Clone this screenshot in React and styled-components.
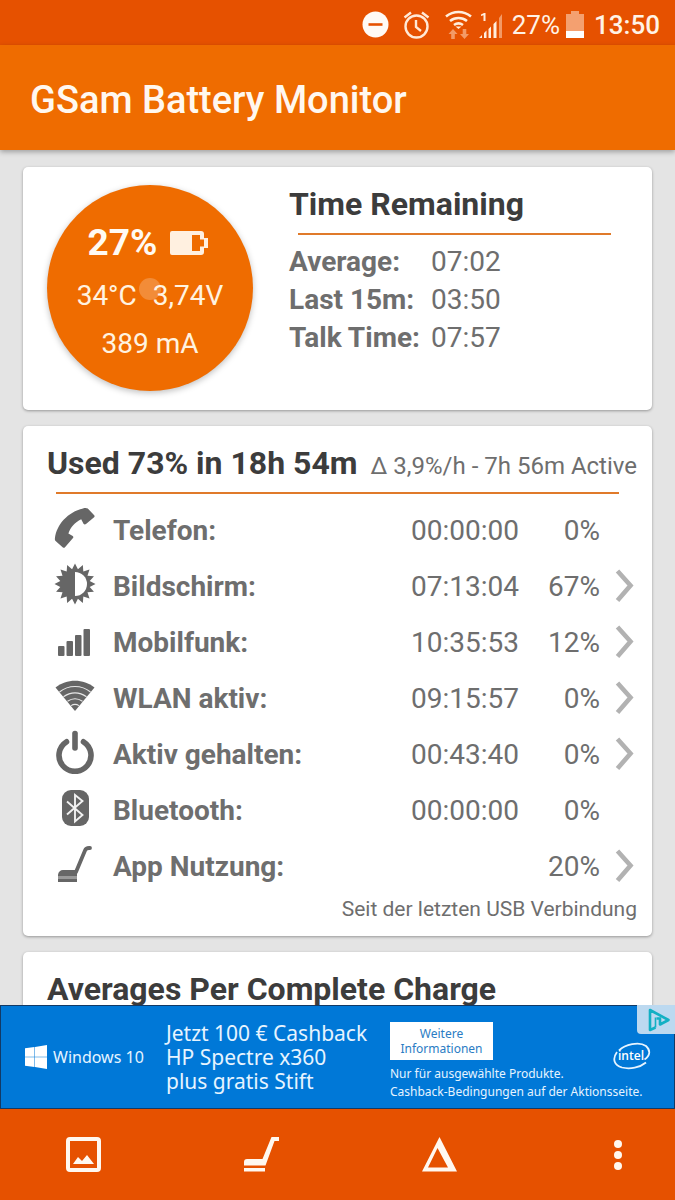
import React from 'react';
import styled, { createGlobalStyle } from 'styled-components';

const GlobalStyle = createGlobalStyle`
  *, *::before, *::after { box-sizing: border-box; }
  body {
    margin: 0;
    background: #e4e4e4;
    color: #6e6e6e;
    font-family: Roboto, "Liberation Sans", sans-serif;
  }
`;

const Screen = styled.div`
  display: flex;
  flex-direction: column;
  height: 100vh;
`;

const StatusBar = styled.div`
  display: flex;
  flex: none;
  align-items: center;
  justify-content: flex-end;
  height: 45px;
  padding: 4px 15px 0;
  background: #e65100;
  color: #fff3e6;
  font-size: 26px;
  svg { display: block; }
`;

const StatusGlyph = styled.svg`
  margin-right: ${(p) => p.$gap}px;
`;

const StatusText = styled.span`
  margin-right: ${(p) => p.$gap || 0}px;
  font-weight: ${(p) => (p.$strong ? 500 : 400)};
`;

const AppBar = styled.header`
  position: relative;
  display: flex;
  flex: none;
  align-items: center;
  height: 105px;
  padding: 4px 30px 0;
  background: #ef6c00;
  box-shadow: 0 2px 5px rgba(0, 0, 0, 0.3);
`;

const AppTitle = styled.h1`
  margin: 0;
  color: #fff8f0;
  font-size: 38px;
  font-weight: 500;
`;

const Content = styled.main`
  display: flex;
  flex: 1;
  flex-direction: column;
  gap: 16px;
  min-height: 0;
  padding: 17px 23px 0;
  overflow-y: auto;
  scrollbar-width: none;
`;

const Card = styled.section`
  flex: none;
  padding: 18px 15px ${(p) => p.$bottom}px 24px;
  border-radius: 5px;
  background: #fff;
  box-shadow: 0 1px 3px rgba(0, 0, 0, 0.35);
`;

const SummaryCard = styled(Card)`
  display: flex;
  gap: 36px;
`;

const CardTitle = styled.h2`
  margin: 0;
  color: #3c3c3c;
  font-size: 32px;
  font-weight: 700;
  line-height: 38px;
  white-space: nowrap;
`;

const TitleRow = styled.div`
  display: flex;
  align-items: baseline;
  justify-content: space-between;
`;

const TitleNote = styled.span`
  font-size: 24px;
  line-height: 28px;
  white-space: nowrap;
`;

const Divider = styled.div`
  height: 2px;
  margin: 10px 18px 8px 9px;
  background: #e07a2a;
`;

const Gauge = styled.div`
  position: relative;
  display: flex;
  flex: none;
  flex-direction: column;
  align-items: center;
  width: 206px;
  height: 206px;
  padding-top: 34px;
  border-radius: 50%;
  background: #ef6c00;
  box-shadow: 0 2px 6px rgba(0, 0, 0, 0.25);
  color: #fff3e0;
  font-size: 28px;
  line-height: 48px;
`;

const GaugeLine = styled.div`
  display: flex;
  align-items: center;
  gap: ${(p) => p.$gap || 0}px;
`;

const GaugeHead = styled(GaugeLine)`
  padding: 0 4px 5px 0;
`;

const GaugePercent = styled.strong`
  color: #fffaf2;
  font-size: 37px;
`;

const TouchDot = styled.span`
  position: absolute;
  top: 93px;
  left: 92px;
  width: 22px;
  height: 22px;
  border-radius: 50%;
  background: rgba(255, 255, 255, 0.22);
`;

const Remaining = styled.div`
  flex: 1;
  padding-right: 8px;
`;

const RemainingList = styled.dl`
  display: grid;
  grid-template-columns: 142px 1fr;
  margin: 0;
  font-size: 28px;
  line-height: 38px;
  white-space: nowrap;
  dt { font-weight: 700; }
  dd { margin: 0; }
`;

const UsageTable = styled.table`
  width: 100%;
  border-collapse: collapse;
  table-layout: fixed;
  font-size: 28px;
`;

const UsageRow = styled.tr`
  height: 56px;
`;

const IconCell = styled.td`
  width: 66px;
  padding: 0 0 4px 7px;
  svg { display: block; }
`;

const LabelCell = styled.th`
  padding: 0;
  font-weight: 700;
  text-align: left;
  white-space: nowrap;
`;

const ValueCell = styled.td`
  width: ${(p) => p.$width}px;
  padding: 0;
  text-align: right;
`;

const ActionCell = styled.td`
  width: 37px;
  padding: 0;
`;

const IconButton = styled.button`
  display: flex;
  align-items: center;
  justify-content: center;
  width: ${(p) => p.$width}px;
  height: 40px;
  padding: 0;
  border: 0;
  background: none;
  cursor: pointer;
`;

const RowButton = styled(IconButton)`
  margin-left: 11px;
`;

const CardNote = styled.p`
  margin: 0;
  font-size: 21px;
  line-height: 30px;
  text-align: right;
`;

const AdBanner = styled.aside`
  position: relative;
  display: flex;
  flex: none;
  align-items: center;
  height: 104px;
  padding: 0 23px 0 24px;
  border: 1px solid #123a66;
  background: #0078d7;
  color: #e6f4ff;
  font-family: "Noto Sans", "Open Sans", sans-serif;
`;

const AdBrand = styled.div`
  display: flex;
  flex: none;
  align-items: center;
  gap: 6px;
  width: 141px;
  font-size: 16px;
  white-space: nowrap;
`;

const AdHeadline = styled.div`
  flex: none;
  width: 224px;
  font-size: 21px;
  line-height: 24px;
  white-space: nowrap;
`;

const AdDetails = styled.div`
  flex: 1;
  padding-top: 8px;
  font-size: 12px;
  line-height: 18px;
  white-space: nowrap;
`;

const AdTopRow = styled.div`
  display: flex;
  align-items: flex-end;
  justify-content: space-between;
  height: 38px;
  margin-bottom: 5px;
`;

const AdButton = styled.button`
  width: 103px;
  height: 38px;
  padding: 0;
  border: 0;
  background: #fff;
  color: #2a7cc4;
  font-family: inherit;
  font-size: 12px;
  line-height: 15px;
`;

const IntelMark = styled.div`
  flex: none;
  margin-bottom: -10px;
  svg { display: block; }
`;

const AdChoices = styled.a`
  position: absolute;
  top: -1px;
  right: -1px;
  display: flex;
  align-items: center;
  justify-content: flex-end;
  width: 38px;
  height: 29px;
  padding-right: 4px;
  border-bottom-left-radius: 4px;
  background: #bcd9f0;
`;

const BottomBar = styled.nav`
  display: flex;
  flex: none;
  align-items: center;
  justify-content: space-between;
  height: 91px;
  padding: 0 40px 0 66px;
  background: #e65100;
`;

const GREY = '#666';

const PhoneIcon = () => (
  <svg width="42" height="42" viewBox="0 0 42 42" fill={GREY}>
    <path d="M29 1.500c1.800-.6 3.400-.6 4.800.1l6.400 6.700c.6.8.5 1.400-.1 2L32 17c-.9.700-1.900.5-2.500-.3l-2.300-4.500c-6.400 3.300-10.600 8-12.800 14.200l4.300 2.600c.7.600.8 1.300.3 2.100L11 40.200c-.6.700-1.300.8-2.100.3L1.600 34c-.7-.7-.8-1.400-.7-2.500C2.500 17.500 14 5 29 1.500z" />
  </svg>
);

const rays = Array.from({ length: 32 }, (_, i) => {
  const r = i % 2 ? 15 : 20.500;
  const a = (i * Math.PI) / 16 - Math.PI / 2;
  return `${(21 + r * Math.cos(a)).toFixed(2)},${(21 + r * Math.sin(a)).toFixed(2)}`;
}).join(' ');

const BrightnessIcon = () => (
  <svg width="42" height="42" viewBox="0 0 42 42">
    <polygon points={rays} fill={GREY} />
    <path d="M21 9a12 12 0 0 1 0 24z" fill="#fff" />
  </svg>
);

const SignalIcon = () => (
  <svg width="42" height="42" viewBox="0 0 42 42" fill={GREY}>
    <rect x="4" y="27" width="6.500" height="10" rx="1" />
    <rect x="12.500" y="22" width="6.500" height="15" rx="1" />
    <rect x="21" y="16" width="6.500" height="21" rx="1" />
    <rect x="29.500" y="10" width="6.500" height="27" rx="1" />
  </svg>
);

const WifiIcon = () => (
  <svg width="42" height="42" viewBox="0 0 42 42">
    <path d="M1.500 12.500C12.500 3.500 29.500 3.500 40.500 12.500L21 36z" fill={GREY} />
    <g fill="none" stroke="#e8e8e8" strokeWidth="1.100">
      <path d="M5.500 17c9-7.300 22-7.300 31 0" />
      <path d="M9.500 21.800c7-5.300 16-5.300 23 0" />
      <path d="M13.500 26.300c4.800-3.300 10.200-3.300 15 0" />
      <path d="M17 30.600c2.700-1.600 5.300-1.600 8 0" />
    </g>
  </svg>
);

const PowerIcon = () => (
  <svg width="42" height="44" viewBox="0 0 42 44" fill="none" stroke={GREY} strokeWidth="5.600" strokeLinecap="round">
    <path d="M21 3.500v14.500" />
    <path d="M12.500 11.800a16 16 0 1 0 17 0" />
  </svg>
);

const BluetoothIcon = () => (
  <svg width="42" height="42" viewBox="0 0 42 42">
    <rect x="8" y="3" width="27" height="36" rx="9" fill={GREY} />
    <path d="M13 14.500L28.500 28L21 34.500V8L28.500 14L13 27.500" fill="none" stroke="#f2f2f2" strokeWidth="1.900" />
  </svg>
);

const MowerIcon = () => (
  <svg width="42" height="42" viewBox="0 0 42 42">
    <path d="M22 29L31 7.500Q32 5 35 5H36" fill="none" stroke={GREY} strokeWidth="3.800" strokeLinecap="round" />
    <path d="M4 33v-1.500q1-4.500 5-4.500H23v6z" fill={GREY} />
    <path d="M4 33H23v3H4z" fill="#999" />
    <path d="M4 36H23v3H4z" fill={GREY} />
  </svg>
);

const Chevron = () => (
  <svg width="19" height="34" viewBox="0 0 19 34" fill="none" stroke="#b2b2b2" strokeWidth="4.600">
    <path d="M2.500 2L15.500 16.500L2.500 31.500" />
  </svg>
);

const usage = [
  { Icon: PhoneIcon, label: 'Telefon', time: '00:00:00', percent: '0%' },
  { Icon: BrightnessIcon, label: 'Bildschirm', time: '07:13:04', percent: '67%', more: true },
  { Icon: SignalIcon, label: 'Mobilfunk', time: '10:35:53', percent: '12%', more: true },
  { Icon: WifiIcon, label: 'WLAN aktiv', time: '09:15:57', percent: '0%', more: true },
  { Icon: PowerIcon, label: 'Aktiv gehalten', time: '00:43:40', percent: '0%', more: true },
  { Icon: BluetoothIcon, label: 'Bluetooth', time: '00:00:00', percent: '0%' },
  { Icon: MowerIcon, label: 'App Nutzung', time: '', percent: '20%', more: true },
];

const remaining = [
  ['Average:', '07:02'],
  ['Last 15m:', '03:50'],
  ['Talk Time:', '07:57'],
];

function Status() {
  return (
    <StatusBar>
      <StatusGlyph $gap={14} width="27" height="27" viewBox="0 0 27 27">
        <circle cx="13.500" cy="13.500" r="13" fill="#fffaf5" />
        <path d="M6.500 13.500h14" stroke="#e65100" strokeWidth="2.600" />
      </StatusGlyph>
      <StatusGlyph $gap={15} width="27" height="28" viewBox="0 0 27 28" fill="none" stroke="#ffe9d6" strokeWidth="2.400">
        <circle cx="13.500" cy="15.500" r="11" />
        <path d="M13 9v7l5 4M1.500 6.500L8 1.500M19 1.500l6.500 5" />
      </StatusGlyph>
      <StatusGlyph $gap={7} width="27" height="30" viewBox="0 0 27 30" fill="none" stroke="#ffeedd" strokeWidth="2.600">
        <path d="M1 6.500C8.500 .5 18.500 .5 26 6.500M5 11c5-4 12-4 17 0M9 15c2.800-2 6.200-2 9 0" />
        <path d="M10.500 16.500h6l-3 2.500z" fill="#ffeedd" stroke="none" />
        <path d="M8 19l4.500 5h-2.700v5H6.200v-5H3.500zM19.500 29l-4.500-5h2.700v-5h3.600v5H24z" fill="#f39a66" stroke="none" />
      </StatusGlyph>
      <StatusGlyph $gap={9} width="24" height="28" viewBox="0 0 24 28" fill="#ffeedd">
        <path d="M2 3.500L5 2h1.500v8H4.500V4.300L2 5z" />
        <path d="M0 27l3-3v3zM5 22l2.500-2.500V27H5zM9.500 18l2.500-2.500V27H9.500zM14.500 13l3-3v17h-3z" />
        <path d="M20 7l3-4v24h-3z" fill="#f39a66" />
      </StatusGlyph>
      <StatusText $gap={6}>27%</StatusText>
      <StatusGlyph $gap={10} width="18" height="28" viewBox="0 0 18 28">
        <path d="M5 0h8v3h5v17H0V3h5z" fill="#f4a070" />
        <path d="M0 20h18v7H0z" fill="#fff" />
      </StatusGlyph>
      <StatusText $strong>13:50</StatusText>
    </StatusBar>
  );
}

function Ad() {
  return (
    <AdBanner>
      <AdBrand>
        <svg width="22" height="24" viewBox="0 0 22 24" fill="#fff">
          <path d="M0 3.300L9.500 2v9.700H0zM10 1.900L22 0v11.700H10zM0 12.300h9.500V22L0 20.700zM10 12.300h12V24l-12-1.900z" />
        </svg>
        Windows 10
      </AdBrand>
      <AdHeadline>
        Jetzt 100 € Cashback<br />HP Spectre x360<br />plus gratis Stift
      </AdHeadline>
      <AdDetails>
        <AdTopRow>
          <AdButton type="button">Weitere<br />Informationen</AdButton>
          <IntelMark>
            <svg width="38" height="28" viewBox="0 0 38 28">
              <path d="M6 8.500C12 2.500 26 -1 33 4C38 8.500 37 14 31.500 17.500M4 10C-1 17 1 23 9 25.500C17 27.500 27 25.500 33 20.500" fill="none" stroke="#e6f4ff" strokeWidth="1.800" />
              <text x="5" y="18" fill="#fff" fontFamily="Open Sans, sans-serif" fontSize="12" fontWeight="600">intel</text>
            </svg>
          </IntelMark>
        </AdTopRow>
        Nur für ausgewählte Produkte.<br />Cashback-Bedingungen auf der Aktionsseite.
      </AdDetails>
      <AdChoices href="#adchoices" aria-label="AdChoices">
        <svg width="24" height="24" viewBox="0 0 24 24" fill="none" stroke="#12b0c4" strokeWidth="2.600" strokeLinejoin="round">
          <path d="M8.500 19.500L3 22V2L21.500 12L13 16.500V10.500H9.500" />
          <path d="M8.500 9.500v10" strokeWidth="1.600" />
        </svg>
      </AdChoices>
    </AdBanner>
  );
}

export default function App() {
  return (
    <Screen>
      <GlobalStyle />
      <Status />
      <AppBar>
        <AppTitle>GSam Battery Monitor</AppTitle>
      </AppBar>
      <Content>
        <SummaryCard $bottom={19}>
          <Gauge>
            <GaugeHead $gap={13}>
              <GaugePercent>27%</GaugePercent>
              <svg width="38" height="24" viewBox="0 0 38 24">
                <path d="M2 0H31q3 0 3 3V7h4V17H34v4q0 3-3 3H2q-2 0-2-2V2q0-2 2-2z" fill="#fff0e0" />
                <path d="M22 4h8v4.500h4v7h-4V20h-8z" fill="#ef6c00" />
              </svg>
            </GaugeHead>
            <GaugeLine $gap={16}>
              <span>34°C</span>
              <span>3,74V</span>
            </GaugeLine>
            <GaugeLine>389 mA</GaugeLine>
            <TouchDot />
          </Gauge>
          <Remaining>
            <CardTitle>Time Remaining</CardTitle>
            <Divider />
            <RemainingList>
              {remaining.map(([label, value]) => (
                <React.Fragment key={label}>
                  <dt>{label}</dt>
                  <dd>{value}</dd>
                </React.Fragment>
              ))}
            </RemainingList>
          </Remaining>
        </SummaryCard>

        <Card $bottom={12}>
          <TitleRow>
            <CardTitle>Used 73% in 18h 54m</CardTitle>
            <TitleNote>Δ 3,9%/h - 7h 56m Active</TitleNote>
          </TitleRow>
          <Divider />
          <UsageTable>
            <tbody>
              {usage.map(({ Icon, label, time, percent, more }) => (
                <UsageRow key={label}>
                  <IconCell><Icon /></IconCell>
                  <LabelCell scope="row">{label}:</LabelCell>
                  <ValueCell $width={120}>{time}</ValueCell>
                  <ValueCell $width={81}>{percent}</ValueCell>
                  <ActionCell>
                    {more && (
                      <RowButton type="button" $width={26} aria-label={label}>
                        <Chevron />
                      </RowButton>
                    )}
                  </ActionCell>
                </UsageRow>
              ))}
            </tbody>
          </UsageTable>
          <CardNote>Seit der letzten USB Verbindung</CardNote>
        </Card>

        <Card $bottom={18}>
          <CardTitle>Averages Per Complete Charge</CardTitle>
        </Card>
      </Content>
      <Ad />
      <BottomBar>
        <IconButton type="button" $width={35} aria-label="Charts">
          <svg width="35" height="35" viewBox="0 0 35 35">
            <rect x="2" y="2" width="31" height="31" rx="2" fill="none" stroke="#fff8f0" strokeWidth="4" />
            <path d="M7 27l5-7 4 4 5-6 7 9z" fill="#fff8f0" />
          </svg>
        </IconButton>
        <IconButton type="button" $width={35} aria-label="App usage">
          <svg width="35" height="35" viewBox="0 0 35 35" fill="#fff8f0">
            <path d="M27.500 0H35v4h-4.500L21.500 28.500H0V25q0-3 3-3H18.500z" />
            <path d="M0 31h21v3.500H0z" />
          </svg>
        </IconButton>
        <IconButton type="button" $width={35} aria-label="Delta">
          <svg width="35" height="35" viewBox="0 0 35 35">
            <path d="M17.500 0L35 34.500H0zM15.500 11L6 30.500H26z" fill="#fff8f0" fillRule="evenodd" />
          </svg>
        </IconButton>
        <IconButton type="button" $width={35} aria-label="More options">
          <svg width="10" height="32" viewBox="0 0 10 32" fill="#fff8f0">
            <circle cx="5" cy="5" r="4" />
            <circle cx="5" cy="16" r="4" />
            <circle cx="5" cy="27" r="4" />
          </svg>
        </IconButton>
      </BottomBar>
    </Screen>
  );
}
